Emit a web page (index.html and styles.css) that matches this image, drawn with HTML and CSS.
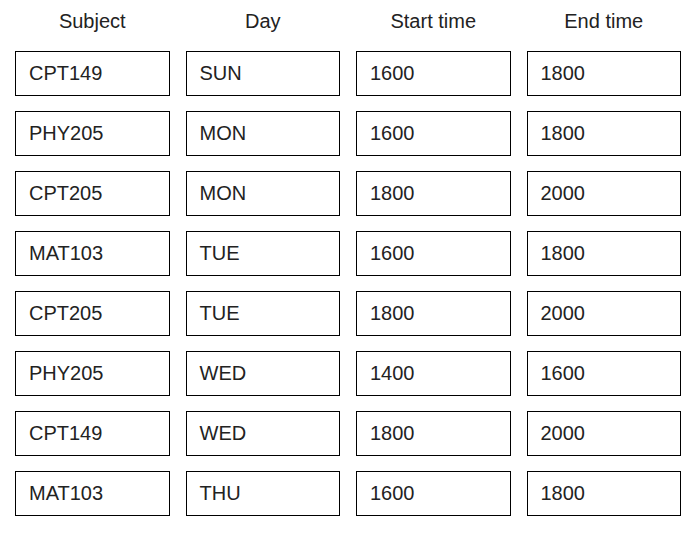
FILE: index.html
```html
<!DOCTYPE html>
<html>
<head>
<meta charset="utf-8">
<link rel="stylesheet" href="styles.css">
</head>
<body>
<div class="table">
  <div class="head">
    <div class="th">Subject</div>
    <div class="th">Day</div>
    <div class="th">Start time</div>
    <div class="th">End time</div>
  </div>
  <div class="rows">
    <div class="cell">CPT149</div><div class="cell">SUN</div><div class="cell">1600</div><div class="cell">1800</div>
    <div class="cell">PHY205</div><div class="cell">MON</div><div class="cell">1600</div><div class="cell">1800</div>
    <div class="cell">CPT205</div><div class="cell">MON</div><div class="cell">1800</div><div class="cell">2000</div>
    <div class="cell">MAT103</div><div class="cell">TUE</div><div class="cell">1600</div><div class="cell">1800</div>
    <div class="cell">CPT205</div><div class="cell">TUE</div><div class="cell">1800</div><div class="cell">2000</div>
    <div class="cell">PHY205</div><div class="cell">WED</div><div class="cell">1400</div><div class="cell">1600</div>
    <div class="cell">CPT149</div><div class="cell">WED</div><div class="cell">1800</div><div class="cell">2000</div>
    <div class="cell">MAT103</div><div class="cell">THU</div><div class="cell">1600</div><div class="cell">1800</div>
  </div>
</div>
</body>
</html>
```
FILE: styles.css
```css
html, body {
  margin: 0;
  padding: 0;
  background: #fff;
}
body {
  font-family: "Liberation Sans", Arial, sans-serif;
  color: #222;
}
.table {
  width: 666px;
  margin-left: 15px;
  padding-top: 9px;
}
.head, .rows {
  display: grid;
  grid-template-columns: repeat(4, 1fr);
  column-gap: 16px;
}
.head {
  height: 42px;
}
.th {
  text-align: center;
  font-size: 20px;
  line-height: 24px;
}
.rows {
  row-gap: 15px;
}
.cell {
  box-sizing: border-box;
  height: 45px;
  border: 1px solid #000;
  padding: 0 13px;
  font-size: 20px;
  display: flex;
  align-items: center;
}
```
